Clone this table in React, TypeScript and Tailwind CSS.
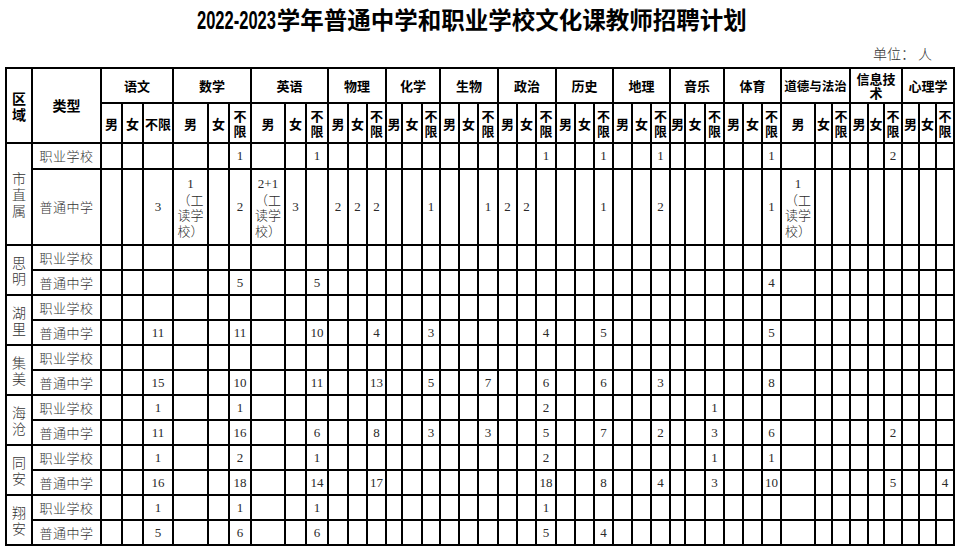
import React from "react";

const SUBJECTS = ["语文", "数学", "英语", "物理", "化学", "生物", "政治", "历史", "地理", "音乐", "体育", "道德与法治", "信息技术", "心理学"];
const G = ["男", "女", "不限"];

type Row = { region?: string; type: string; d: Record<string, string> };

const W = "1|（工|读学|校）";

const rows: Row[] = [
  { region: "市直属", type: "职业学校", d: { "数学.不限": "1", "英语.不限": "1", "政治.不限": "1", "历史.不限": "1", "地理.不限": "1", "体育.不限": "1", "信息技术.不限": "2" } },
  { type: "普通中学", d: { "语文.不限": "3", "数学.男": W, "数学.不限": "2", "英语.男": "2+1|（工|读学|校）", "英语.女": "3", "物理.男": "2", "物理.女": "2", "物理.不限": "2", "化学.不限": "1", "生物.不限": "1", "政治.男": "2", "政治.女": "2", "历史.不限": "1", "地理.不限": "2", "体育.不限": "1", "道德与法治.男": W } },
  { region: "思明", type: "职业学校", d: {} },
  { type: "普通中学", d: { "数学.不限": "5", "英语.不限": "5", "体育.不限": "4" } },
  { region: "湖里", type: "职业学校", d: {} },
  { type: "普通中学", d: { "语文.不限": "11", "数学.不限": "11", "英语.不限": "10", "物理.不限": "4", "化学.不限": "3", "政治.不限": "4", "历史.不限": "5", "体育.不限": "5" } },
  { region: "集美", type: "职业学校", d: {} },
  { type: "普通中学", d: { "语文.不限": "15", "数学.不限": "10", "英语.不限": "11", "物理.不限": "13", "化学.不限": "5", "生物.不限": "7", "政治.不限": "6", "历史.不限": "6", "地理.不限": "3", "体育.不限": "8" } },
  { region: "海沧", type: "职业学校", d: { "语文.不限": "1", "数学.不限": "1", "政治.不限": "2", "音乐.不限": "1" } },
  { type: "普通中学", d: { "语文.不限": "11", "数学.不限": "16", "英语.不限": "6", "物理.不限": "8", "化学.不限": "3", "生物.不限": "3", "政治.不限": "5", "历史.不限": "7", "地理.不限": "2", "音乐.不限": "3", "体育.不限": "6", "信息技术.不限": "2" } },
  { region: "同安", type: "职业学校", d: { "语文.不限": "1", "数学.不限": "2", "英语.不限": "1", "政治.不限": "2", "音乐.不限": "1", "体育.不限": "1" } },
  { type: "普通中学", d: { "语文.不限": "16", "数学.不限": "18", "英语.不限": "14", "物理.不限": "17", "政治.不限": "18", "历史.不限": "8", "地理.不限": "4", "音乐.不限": "3", "体育.不限": "10", "信息技术.不限": "5", "心理学.不限": "4" } },
  { region: "翔安", type: "职业学校", d: { "语文.不限": "1", "数学.不限": "1", "英语.不限": "1", "政治.不限": "1" } },
  { type: "普通中学", d: { "语文.不限": "5", "数学.不限": "6", "英语.不限": "6", "政治.不限": "5", "历史.不限": "4" } },
];

const hdr = "bg-white flex items-center justify-center text-center font-bold text-black [font-family:'Noto_Sans_CJK_SC',sans-serif]";
const body = "bg-white flex items-center justify-center text-center text-[#2a2a2a] [font-family:'Liberation_Serif','Noto_Sans_CJK_SC',serif]";

export default function App() {
  return (
    <div className="w-[960px] h-[550px] bg-white relative overflow-hidden">
      <div className="h-[40px] flex items-center justify-center pr-[16px] pt-[1px]">
        <h1 className="text-[23.5px] font-bold text-black leading-none [font-family:'Noto_Sans_CJK_SC',sans-serif] whitespace-nowrap">
          <span className="inline-block text-[25px] scale-x-[0.66] origin-left mr-[-40px] [font-family:'Liberation_Sans',sans-serif]">2022-2023</span>学年普通中学和职业学校文化课教师招聘计划
        </h1>
      </div>
      <div className="h-[27px] flex items-center justify-end pr-[28px] text-[14px] text-[#333] [font-family:'Noto_Sans_CJK_SC',serif] font-light">
        单位：&nbsp;人
      </div>
      <div className="ml-[5px] w-[950px] p-[2px] bg-black gap-[2px] grid grid-cols-[24px_67px_19px_19px_28px_33px_19px_20px_32px_19px_20px_18px_17px_17px_14px_18px_16px_17px_17px_18px_17px_17px_18px_17px_17px_17px_17px_17px_17px_13px_18px_17px_17px_17px_17px_32px_15px_16px_16px_14px_16px_15px_15px_16px] grid-rows-[33px_38px_24px_74px_repeat(12,23px)]">
        <div className={`${hdr} row-span-2 text-[14px] leading-[16px] flex-col`}>
          <span>区</span>
          <span>域</span>
        </div>
        <div className={`${hdr} row-span-2 text-[14px]`}>类型</div>
        {SUBJECTS.map((s) => (
          <div
            key={s}
            className={`${hdr} col-span-3 ${s === "道德与法治" ? "text-[12.5px] whitespace-nowrap" : "text-[13px]"} leading-[14px] px-[4px]`}
          >
            {s === "信息技术" ? (
              <span>
                信息技
                <br />术
              </span>
            ) : (
              s
            )}
          </div>
        ))}
        {SUBJECTS.map((s) =>
          G.map((g) => (
            <div key={s + g} className={`${hdr} text-[13px] leading-[15px]`}>
              {g === "不限" && s !== "语文" ? (
                <span>
                  不<br />限
                </span>
              ) : (
                g
              )}
            </div>
          ))
        )}
        {rows.map((r, i) => (
          <React.Fragment key={i}>
            {r.region && (
              <div className={`${body} row-span-2 flex-col text-[14px] leading-[16px] text-[#333] [font-family:'Noto_Sans_CJK_SC',serif] font-light`}>
                {r.region.split("").map((c) => (
                  <span key={c}>{c}</span>
                ))}
              </div>
            )}
            <div className={`${body} text-[13px] tracking-[0.5px] text-[#333] [font-family:'Noto_Sans_CJK_SC',serif] font-light`}>{r.type}</div>
            {SUBJECTS.map((s) =>
              G.map((g) => {
                const v = r.d[`${s}.${g}`];
                return (
                  <div key={s + g} className={`${body} text-[13px] leading-[15.5px] flex-col`}>
                    {v
                      ? v.split("|").map((p, k) => (
                          <span key={k} className={k > 0 ? "[font-family:'Noto_Sans_CJK_SC',serif] font-light text-[13px] whitespace-nowrap" : ""}>
                            {p}
                          </span>
                        ))
                      : null}
                  </div>
                );
              })
            )}
          </React.Fragment>
        ))}
      </div>
    </div>
  );
}
